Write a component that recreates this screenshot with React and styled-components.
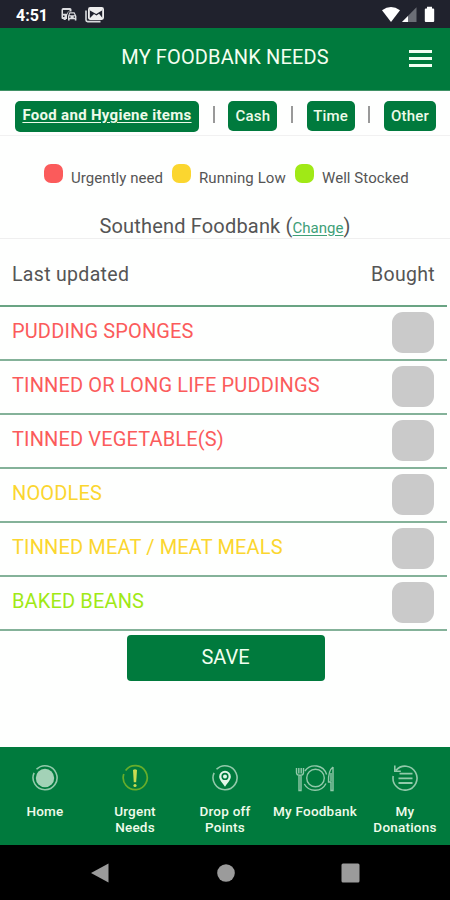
import React from "react";
import styled, { createGlobalStyle } from "styled-components";

const Global = createGlobalStyle`
  * { box-sizing: border-box; }
  body { margin: 0; background: #fff; }
`;

const GREEN = "#007a3d";
const RED = "#fb5b5b";
const YELLOW = "#fbd62f";
const LIME = "#a0e916";
const MINT = "#91c9aa";

const Screen = styled.div`
  width: 450px;
  height: 900px;
  display: flex;
  flex-direction: column;
  overflow: hidden;
  background: #fefffe;
  color: #555;
  font-family: Roboto, "Liberation Sans", sans-serif;
  white-space: nowrap;
`;

const StatusBar = styled.div`
  height: 28px;
  flex: none;
  display: flex;
  align-items: center;
  justify-content: space-between;
  padding: 2px 14px 0 16px;
  background: #20222d;
  color: #fff;
`;

const Clock = styled.span`
  width: 37px;
  font-size: 16px;
  font-weight: 700;
`;

const Cluster = styled.div`
  display: flex;
  align-items: center;
  gap: 8px;
  svg { display: block; }
`;

const Header = styled.header`
  height: 63px;
  flex: none;
  display: grid;
  grid-template-columns: 31px 1fr 31px;
  align-items: center;
  padding: 0 15px;
  background: ${GREEN};
  border-bottom: 1px solid #3f9165;
  color: #f4fff0;
`;

const Title = styled.h1`
  grid-column: 2;
  margin: 0 0 4px;
  font-size: 20px;
  font-weight: 400;
  letter-spacing: 0.13px;
  text-align: center;
`;

const MenuButton = styled.button`
  width: 31px;
  height: 31px;
  padding: 3px 0 0 3px;
  border: 0;
  background: none;
`;

const Tabs = styled.nav`
  height: 45px;
  flex: none;
  display: flex;
  align-items: flex-start;
  padding: 10px 14px 0 15px;
  border-bottom: 1px solid #f1f1f1;
`;

const Tab = styled.button`
  width: ${(p) => p.$w}px;
  height: ${(p) => (p.$active ? 31 : 30)}px;
  padding: ${(p) => (p.$active ? "0 0 3px" : "0 0 1px")};
  border: 0;
  border-radius: 5px;
  background: ${GREEN};
  color: #eefbe9;
  font: ${(p) => (p.$active ? 700 : 500)} 15px Roboto, sans-serif;
  letter-spacing: ${(p) => (p.$active ? 0.3 : 0.2)}px;
  text-decoration: ${(p) => (p.$active ? "underline" : "none")};
  text-underline-offset: 2px;
`;

const Divider = styled.span`
  flex: 1;
  display: flex;
  justify-content: center;
  padding-top: 5px;
  &::before {
    content: "";
    width: 2px;
    height: 17px;
    background: #999;
  }
`;

const Legend = styled.div`
  height: 64px;
  flex: none;
  display: flex;
  align-items: flex-start;
  padding: 28px 0 0 44px;
`;

const LegendItem = styled.div`
  width: ${(p) => p.$w}px;
  display: flex;
  gap: 8px;
`;

const Swatch = styled.span`
  width: 19px;
  height: 19px;
  border-radius: 7px;
  background: ${(p) => p.$color};
`;

const LegendLabel = styled.span`
  padding-top: 5px;
  font-size: 15px;
  line-height: 18px;
  letter-spacing: 0.06px;
`;

const BankName = styled.h2`
  height: 39px;
  flex: none;
  margin: 0;
  padding-top: 14px;
  border-bottom: 1px solid #efefef;
  font-size: 20px;
  line-height: 24px;
  font-weight: 400;
  letter-spacing: 0.18px;
  text-align: center;
`;

const ChangeLink = styled.a`
  color: #3fa078;
  font-size: 15px;
  letter-spacing: 0;
  text-decoration: underline;
  text-underline-offset: 2px;
`;

const Table = styled.section`
  width: 447px;
  flex: none;
`;

const HeadRow = styled.div`
  height: 67.5px;
  display: flex;
  align-items: center;
  justify-content: space-between;
  padding: 5px 12px 0;
  border-bottom: 2px solid #69a483;
  font-size: 19.5px;
  letter-spacing: 0.32px;
`;

const Row = styled.div`
  height: 54.1px;
  display: flex;
  align-items: flex-start;
  justify-content: space-between;
  padding: 5px 13px 0 12px;
  border-bottom: 2px solid #84b299;
`;

const ItemName = styled.span`
  padding-top: 7px;
  color: ${(p) => p.$color};
  font-size: 20px;
  line-height: 24px;
  letter-spacing: 0.14px;
`;

const CheckBox = styled.button`
  width: 42px;
  height: 41px;
  padding: 0;
  border: 0;
  border-radius: 11px;
  background: #cacaca;
`;

const SaveButton = styled.button`
  width: 198px;
  height: 46px;
  flex: none;
  align-self: center;
  margin: 4px 0 0 1px;
  padding: 0 0 2px;
  border: 0;
  border-radius: 4px;
  background: ${GREEN};
  color: #f0fff0;
  font: 400 20px Roboto, sans-serif;
`;

const BottomNav = styled.nav`
  height: 98px;
  flex: none;
  margin-top: auto;
  display: grid;
  grid-template-columns: repeat(5, 1fr);
  background: ${GREEN};
`;

const NavItem = styled.div`
  display: flex;
  flex-direction: column;
  align-items: center;
  padding-top: 17px;
  gap: 11px;
  svg { display: block; }
`;

const NavLabel = styled.span`
  color: #effbea;
  font-size: 13.5px;
  font-weight: 500;
  line-height: 16px;
  text-align: center;
  letter-spacing: 0.22px;
  white-space: pre;
`;

const SystemBar = styled.div`
  height: 55px;
  flex: none;
  display: flex;
  justify-content: center;
  padding: 18px 0 0 1px;
  gap: 105px;
  background: #000;
`;

const CarIcon = () => (
  <svg width="16" height="14" viewBox="0 0 16 14">
    <path d="M2.2 0H9q1.5 0 1.5 1.5v2H7.7L6 7.5V11H4.8v1H2.6v-1H1.5Q.5 11 .5 9.5V2Q.5 0 2.2 0z" fill="#dcdde0" />
    <path d="M2 2h6.5v1.5H7L6 5.8H2zM2 7.6h1.5v1.5H2z" fill="#20222d" />
    <path d="M8.5 4.2h5L15.4 8v4.5h-1.6v-1.2H8.6v1.2H7V8z" fill="#dcdde0" />
    <path d="M9.2 5.4h3.6l.9 1.9H8.4z" fill="#20222d" />
    <circle cx="8.9" cy="9.1" r=".8" fill="#20222d" />
    <circle cx="13.3" cy="9.1" r=".8" fill="#20222d" />
  </svg>
);

const NewsIcon = () => (
  <svg width="20" height="16" viewBox="0 0 20 16" fill="none">
    <path d="M1 3.5V13Q1 14.6 2.7 14.6H15.5" stroke="#d9dbde" strokeWidth="1.6" />
    <rect x="3.9" y="1" width="14.2" height="11" rx="1.4" stroke="#eee" strokeWidth="1.8" />
    <path d="M5 1.5h12v2L11.2 7 5 3.5zM5 11l4-4 2.5 1.5L14 6.8l3.5 4.2z" fill="#eee" />
  </svg>
);

const SignalIcons = () => (
  <svg width="54" height="18" viewBox="0 0 54 18">
    <path d="M0 4.3Q9-2.5 18 4.3L9 16z" fill="#fff" />
    <path d="M34.5 1.3V16H20z" fill="#6b6e76" />
    <path d="M26 10v6h-6z" fill="#fff" />
    <path d="M45 .8h5v1.7h1.2q1 0 1 1V15q0 1-1 1h-7.4q-1 0-1-1V3.5q0-1 1-1H45z" fill="#fff" />
  </svg>
);

const MenuIcon = () => (
  <svg width="24" height="20" viewBox="0 0 24 20" fill="#f2fff2">
    <path d="M0 1h23v3H0zM0 8h23v3H0zM0 15h23v3H0z" />
  </svg>
);

const icons = {
  home: (
    <svg width="28" height="28" viewBox="0 0 28 28" fill="none">
      <path d="M5.5 5.3A12 12 0 1 1 3.1 8.8" stroke={MINT} strokeWidth="1.6" />
      <circle cx="14" cy="14" r="9.2" fill="#a3d2b7" />
    </svg>
  ),
  urgent: (
    <svg width="28" height="28" viewBox="0 0 28 28" fill="none">
      <path d="M4.6 6.5A12 12 0 1 1 2.8 10" stroke="#67ad2b" strokeWidth="1.7" />
      <path d="M12 6q2-1.6 4 0l-.8 12.3h-2.4z" fill="#c9dc52" />
      <circle cx="14" cy="21.5" r="1.6" fill="#c9dc52" />
    </svg>
  ),
  drop: (
    <svg width="28" height="28" viewBox="0 0 28 28" fill="none">
      <path d="M5.5 5.3A12 12 0 1 1 3.1 8.8" stroke={MINT} strokeWidth="1.6" />
      <path d="M14 22.8C10.2 17.5 8.2 15.5 8.2 12.6a5.8 5.8 0 0 1 11.6 0C19.8 15.5 17.8 17.5 14 22.8z" fill="#e2f7e9" />
      <circle cx="14" cy="12.4" r="2.8" stroke={GREEN} strokeWidth="1.6" />
    </svg>
  ),
  food: (
    <svg width="40" height="28" viewBox="0 0 40 28" fill="none" stroke={MINT} strokeWidth="1.4">
      <path d="M9.9 7A12.3 12.3 0 0 1 31.6 10.5M9.3 20A12.3 12.3 0 0 0 31 19.5" />
      <circle cx="20.5" cy="14" r="8.8" />
      <path d="M1.5 4v4.5q0 2.8 3.5 2.8t3.5-2.8V4M3.8 4v5.5M6.2 4v5.5M4 11.5v15h2v-15M38 3v23.5h-2V18h-2.5Q33.2 6.5 38 3M36 9v8" />
    </svg>
  ),
  donations: (
    <svg width="28" height="28" viewBox="0 0 28 28" fill="none" stroke={MINT} strokeWidth="1.6">
      <path d="M5 6.2A12 12 0 1 1 2.2 12M3.8 1.5v5.8h6" />
      <path d="M8.5 9.7h13M7.5 14.3h14M7.5 19h14" strokeWidth="1.8" />
    </svg>
  ),
};

const items = [
  ["PUDDING SPONGES", RED],
  ["TINNED OR LONG LIFE PUDDINGS", RED],
  ["TINNED VEGETABLE(S)", RED],
  ["NOODLES", YELLOW],
  ["TINNED MEAT / MEAT MEALS", YELLOW],
  ["BAKED BEANS", LIME],
];

const legend = [
  ["Urgently need", RED, 128],
  ["Running Low", YELLOW, 123],
  ["Well Stocked", LIME, 120],
];

const navItems = [
  ["home", "Home"],
  ["urgent", "Urgent\nNeeds"],
  ["drop", "Drop off\nPoints"],
  ["food", "My Foodbank"],
  ["donations", "My\nDonations"],
];

export default function App() {
  return (
    <Screen>
      <Global />
      <StatusBar>
        <Cluster>
          <Clock>4:51</Clock>
          <CarIcon />
          <NewsIcon />
        </Cluster>
        <SignalIcons />
      </StatusBar>
      <Header>
        <Title>MY FOODBANK NEEDS</Title>
        <MenuButton aria-label="Menu"><MenuIcon /></MenuButton>
      </Header>
      <Tabs>
        <Tab $w={184} $active>Food and Hygiene items</Tab>
        <Divider />
        <Tab $w={49}>Cash</Tab>
        <Divider />
        <Tab $w={48}>Time</Tab>
        <Divider />
        <Tab $w={52}>Other</Tab>
      </Tabs>
      <Legend>
        {legend.map(([label, color, w]) => (
          <LegendItem key={label} $w={w}>
            <Swatch $color={color} />
            <LegendLabel>{label}</LegendLabel>
          </LegendItem>
        ))}
      </Legend>
      <BankName>Southend Foodbank (<ChangeLink>Change</ChangeLink>)</BankName>
      <Table>
        <HeadRow><span>Last updated</span><span>Bought</span></HeadRow>
        {items.map(([name, color]) => (
          <Row key={name}>
            <ItemName $color={color}>{name}</ItemName>
            <CheckBox aria-label={name} />
          </Row>
        ))}
      </Table>
      <SaveButton>SAVE</SaveButton>
      <BottomNav>
        {navItems.map(([icon, label]) => (
          <NavItem key={icon}>{icons[icon]}<NavLabel>{label}</NavLabel></NavItem>
        ))}
      </BottomNav>
      <SystemBar>
        <svg width="20" height="20" viewBox="0 0 20 20" fill="#9b9b9b"><path d="M0 10 17.5.5v19z" /></svg>
        <svg width="20" height="20" viewBox="0 0 20 20" fill="#9b9b9b"><circle cx="10" cy="10" r="8.8" /></svg>
        <svg width="20" height="20" viewBox="0 0 20 20" fill="#9b9b9b"><rect x=".5" y=".5" width="18" height="19" rx="1.5" /></svg>
      </SystemBar>
    </Screen>
  );
}
